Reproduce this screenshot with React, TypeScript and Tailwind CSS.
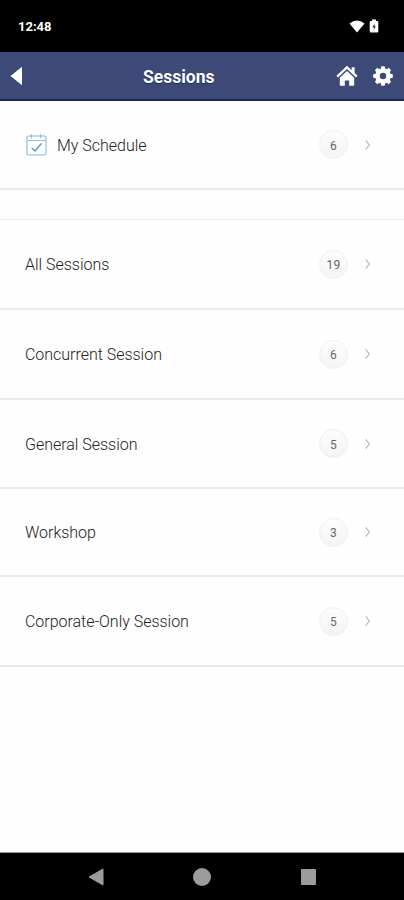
interface Session {
  label: string;
  count: number;
  height: string;
}

const sessions: Session[] = [
  { label: 'All Sessions', count: 19, height: 'h-[90px]' },
  { label: 'Concurrent Session', count: 6, height: 'h-[90px]' },
  { label: 'General Session', count: 5, height: 'h-[89px]' },
  { label: 'Workshop', count: 3, height: 'h-[88px]' },
  { label: 'Corporate-Only Session', count: 5, height: 'h-[90px]' },
];

function CalendarIcon() {
  return (
    <svg className="mr-[9px] h-[23px] w-[23px]" viewBox="0 0 23 23" fill="none" stroke="#86b8df">
      <rect x="2" y="3" width="19" height="19" rx="1.5" strokeWidth="1.1" />
      <path d="M2.5 7.5H21" strokeWidth="0.9" />
      <path d="M6.3 1.2V5.2M15.7 1.2V5.2" strokeWidth="1.1" />
      <path d="M6.7 15L10.1 18L16.3 10.5" stroke="#6799c5" strokeWidth="1.5" />
    </svg>
  );
}

function HomeIcon() {
  return (
    <svg className="h-[22px] w-[22px]" viewBox="0 0 22 22" fill="#fff">
      <path d="M1.2 11.6L11 2.3L20.8 11.6" fill="none" stroke="#fff" strokeWidth="2.3" />
      <path d="M15.7 2.2H18.6V8.8L15.7 6Z" />
      <path d="M11 5.9L18.2 12.7V20Q18.2 20.8 17.4 20.8H13.2V15.5H8.8V20.8H4.6Q3.8 20.8 3.8 20V12.7Z" />
    </svg>
  );
}

function GearIcon() {
  return (
    <svg className="h-5 w-5" viewBox="0 0 20 20" fill="#fff">
      <circle cx="10" cy="10" r="5.5" fill="none" stroke="#fff" strokeWidth="4.6" />
      {[0, 45, 90, 135, 180, 225, 270, 315].map((angle) => (
        <path key={angle} d="M7.8 3.5L8.3 0.2H11.7L12.2 3.5Z" transform={`rotate(${angle} 10 10)`} />
      ))}
    </svg>
  );
}

function CountAndArrow({ count }: { count: number }) {
  return (
    <div className="ml-auto flex items-center">
      <span className="flex h-[29px] w-[29px] items-center justify-center rounded-full border border-[#f0f0f0] bg-linear-to-b from-[#fdfdfd] to-[#f4f4f4] pt-[2px] text-[12px] font-normal tracking-[0.3px] text-[#666]">
        {count}
      </span>
      <svg className="ml-[15px] h-3 w-2" viewBox="0 0 8 12" fill="none" stroke="#b8b8b8" strokeWidth="1.2">
        <path d="M2.7 1.3L6.3 6L2.7 10.7" />
      </svg>
    </div>
  );
}

export default function App() {
  return (
    <div className="flex h-[900px] w-[404px] flex-col overflow-hidden bg-[#fefefe] font-['Roboto',sans-serif]">
      {/* Status bar */}
      <div className="flex h-[52px] shrink-0 items-center bg-black pr-[25px] pl-[18px] text-white">
        <span className="pt-px text-[13px] font-bold">12:48</span>
        <svg className="ml-auto h-[13px] w-[16px]" viewBox="0 0 16 13" fill="#fff">
          <path d="M0.5 3.6Q8 -2.4 15.5 3.6L8 12.5Z" />
        </svg>
        <svg className="ml-[4px] h-[14px] w-[10px]" viewBox="0 0 10 14">
          <path d="M3 0.5H7V2H8Q9.3 2 9.3 3.3V12.2Q9.3 13.5 8 13.5H2Q0.7 13.5 0.7 12.2V3.3Q0.7 2 2 2H3Z" fill="#fff" />
          <path d="M5.6 4.5L3.4 8.2H4.8V11L6.8 7.3H5.6Z" fill="#333" />
        </svg>
      </div>

      {/* Title bar */}
      <header className="flex h-[49px] shrink-0 items-center border-b-2 border-[#142a61] bg-[#3d4a77] pr-[11px] pl-[10px] text-white">
        <svg className="h-5 w-3" viewBox="0 0 12 20" fill="#fff">
          <path d="M0.5 10L12 0.8V19.2Z" />
        </svg>
        <h1 className="ml-[121px] pt-[4px] text-[17.5px] font-bold [text-shadow:0_1px_1px_#142a61]">Sessions</h1>
        <div className="ml-auto flex items-center gap-[15px]">
          <HomeIcon />
          <GearIcon />
        </div>
      </header>

      {/* Session list */}
      <main className="flex-1 text-[16px] font-light tracking-[-0.02px] text-[#222]">
        <div className="flex h-[89px] items-center border-b-2 border-[#e9e9e9] pr-[33px] pl-[25px]">
          <CalendarIcon />
          <span className="pt-[2px]">My Schedule</span>
          <CountAndArrow count={6} />
        </div>
        <div className="h-[30px] border-b border-[#e8e8e8]" />
        {sessions.map(({ label, count, height }) => (
          <div key={label} className={`flex ${height} items-center border-b-2 border-[#ebebeb] pr-[33px] pl-[25px]`}>
            <span className="pt-[2px]">{label}</span>
            <CountAndArrow count={count} />
          </div>
        ))}
      </main>

      {/* Navigation bar */}
      <nav className="flex h-12 shrink-0 items-center border-t border-[#999] bg-black pl-[88px]">
        <svg className="h-[18px] w-4" viewBox="0 0 16 18" fill="#9c9c9c" stroke="#9c9c9c" strokeLinejoin="round">
          <path d="M1 9L15 1V17Z" />
        </svg>
        <div className="ml-[89px] h-[18px] w-[18px] rounded-full bg-[#9c9c9c]" />
        <div className="ml-[90px] h-4 w-[15px] rounded-[1px] bg-[#9c9c9c]" />
      </nav>
    </div>
  );
}
